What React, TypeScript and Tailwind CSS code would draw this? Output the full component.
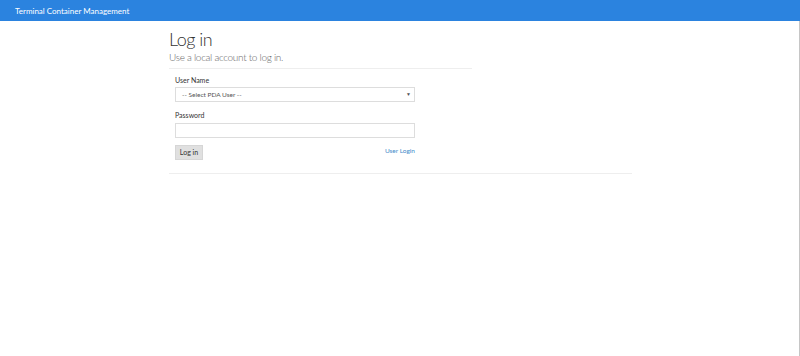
import React from 'react';

export default function App() {
  return (
    <div className="min-h-[356px] bg-white font-['Lato',sans-serif] text-[#333]">
      <header className="h-[21px] bg-[#2b83df] flex items-center px-[15px]">
        <span className="text-white text-[8px]">Terminal Container Management</span>
      </header>
      <div className="border-r border-[#c6c6c6] min-h-[335px]">
        <div className="ml-[169px] w-[463px] pt-[7px]">
          <div className="w-[303px]">
            <h2 className="text-[18px] font-light leading-[22px] tracking-[-0.5px]">Log in</h2>
            <h4 className="text-[10px] font-light leading-[14px] tracking-[-0.3px] text-[#666]">Use a local account to log in.</h4>
            <hr className="mt-[4px] border-t border-[#eee]" />
            <form className="px-[6px] pt-[7px] w-[252px]">
              <label className="block text-[7px] leading-[9px] mb-[2px]">User Name</label>
              <div className="relative h-[15px] border border-[#ddd] flex items-center px-[6px]">
                <span className="text-[6.5px] text-[#555]">-- Select PDA User --</span>
                <span className="absolute right-[3px] top-[3px] text-[5px] text-[#555]">▼</span>
              </div>
              <label className="block text-[7px] leading-[9px] mt-[9px] mb-[3px]">Password</label>
              <div className="h-[15px] border border-[#ddd]" />
              <div className="flex justify-between items-start mt-[7px]">
                <button type="button" className="h-[15px] w-[28px] bg-[#e0e0e0] border border-[#d6d6d6] text-[7px] text-[#333]">
                  Log in
                </button>
                <a href="#" className="text-[6.5px] text-[#428bca] mt-[1px]">User Login</a>
              </div>
            </form>
          </div>
          <hr className="mt-[13px] border-t border-[#eee]" />
        </div>
      </div>
    </div>
  );
}
